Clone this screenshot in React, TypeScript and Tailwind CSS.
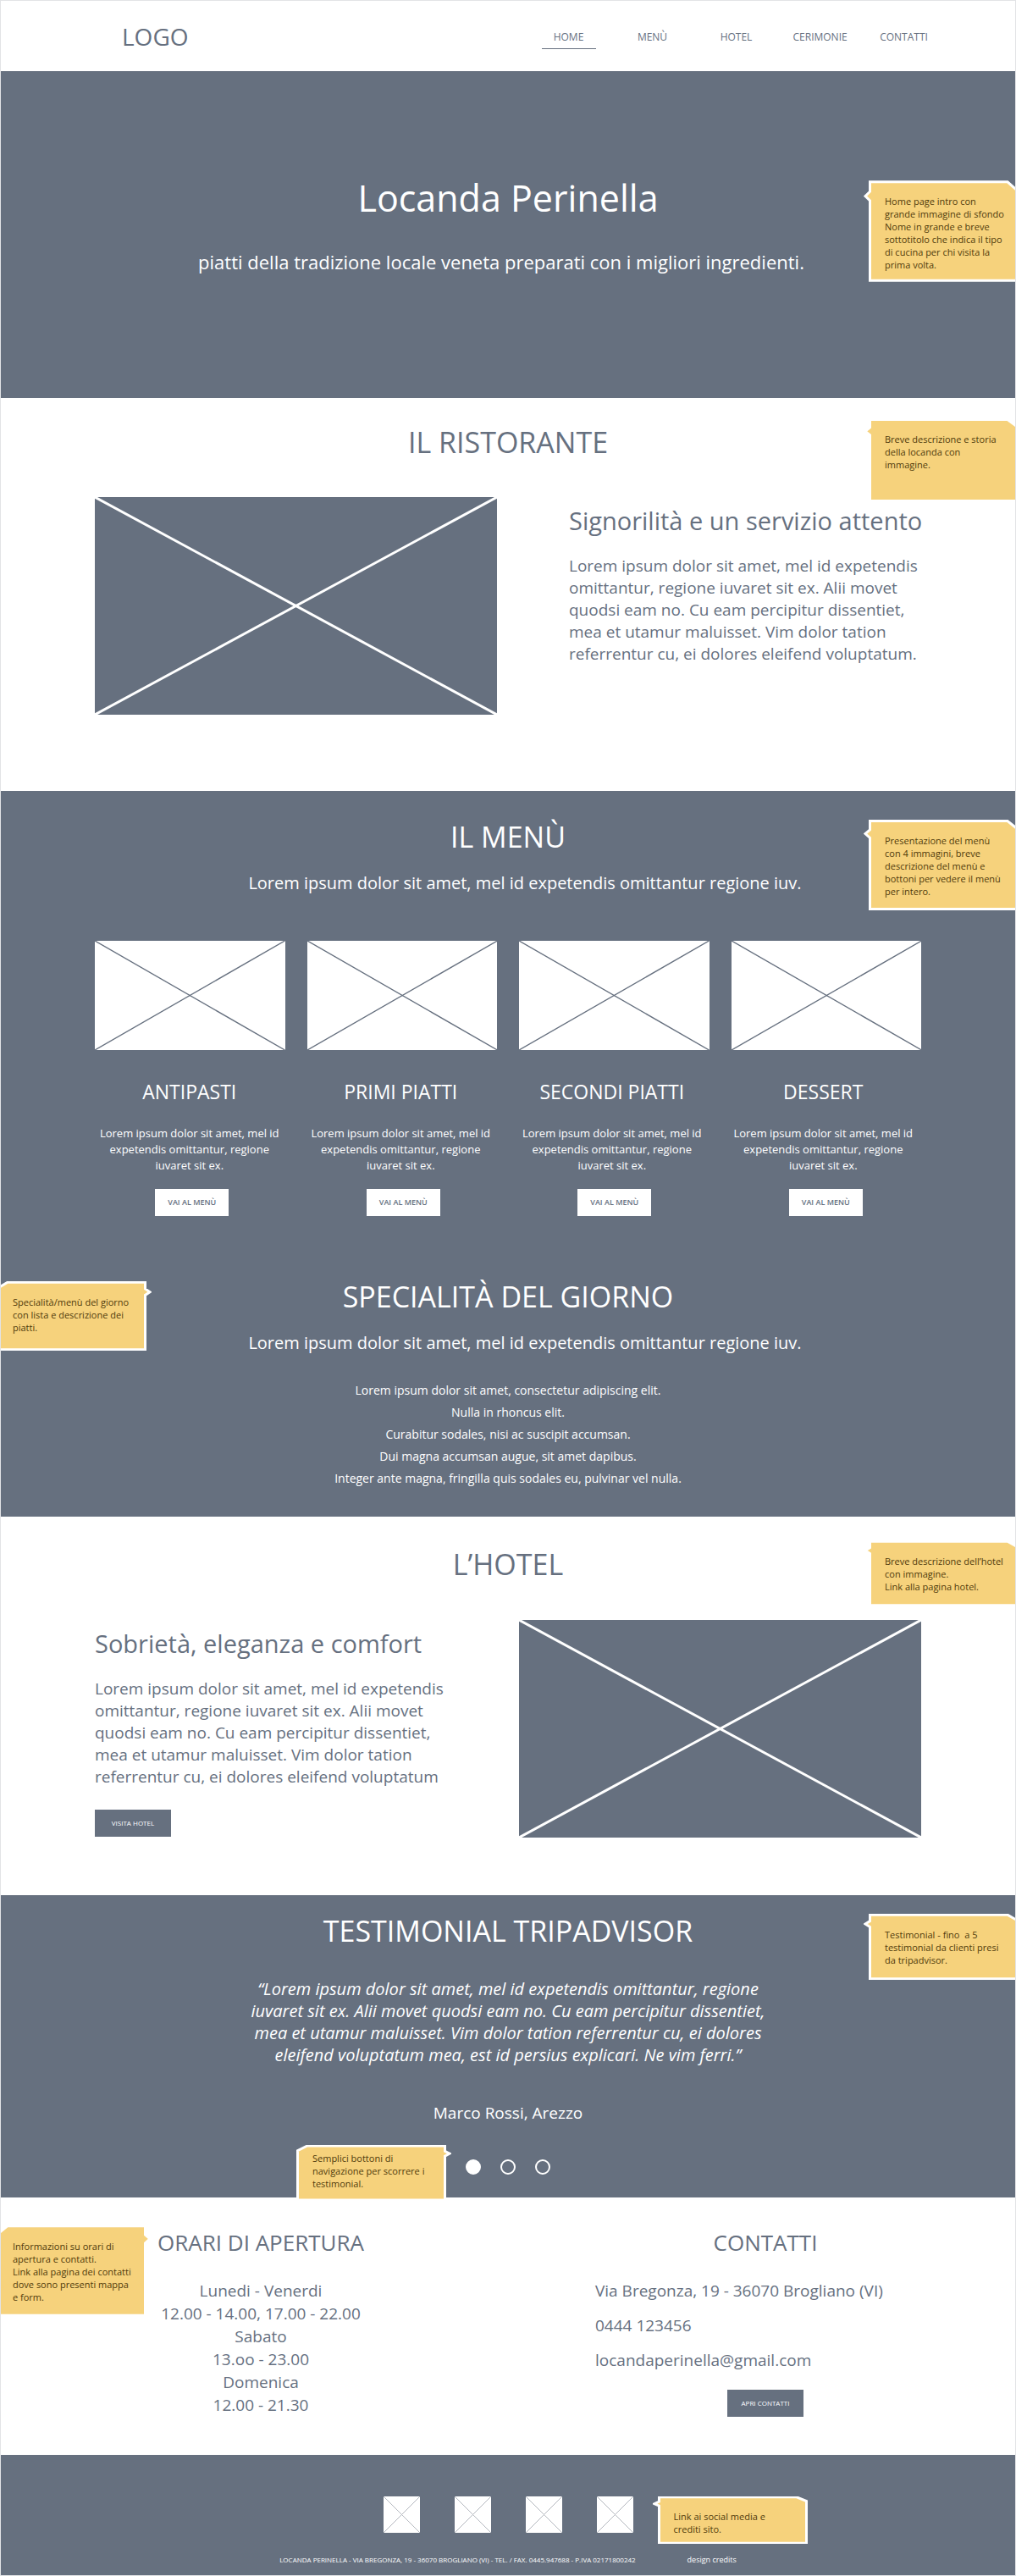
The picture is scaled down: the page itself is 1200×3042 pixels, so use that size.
import { Fragment, type ReactNode } from "react";

const NAV = ["HOME", "MENÙ", "HOTEL", "CERIMONIE", "CONTATTI"];
const MENU = ["ANTIPASTI", "PRIMI PIATTI", "SECONDI PIATTI", "DESSERT"];
const SPECIALS = [
  "Lorem ipsum dolor sit amet, consectetur adipiscing elit.",
  "Nulla in rhoncus elit.",
  "Curabitur sodales, nisi ac suscipit accumsan.",
  "Dui magna accumsan augue, sit amet dapibus.",
  "Integer ante magna, fringilla quis sodales eu, pulvinar vel nulla.",
];
const QUOTE = [
  "“Lorem ipsum dolor sit amet, mel id expetendis omittantur, regione",
  "iuvaret sit ex. Alii movet quodsi eam no. Cu eam percipitur dissentiet,",
  "mea et utamur maluisset. Vim dolor tation referrentur cu, ei dolores",
  "eleifend voluptatum mea, est id persius explicari. Ne vim ferri.”",
];
const HOURS = [
  "Lunedi - Venerdi",
  "12.00 - 14.00, 17.00 - 22.00",
  "Sabato",
  "13.oo - 23.00",
  "Domenica",
  "12.00 - 21.30",
];

function Lines({ lines }: { lines: string[] }) {
  return (
    <>
      {lines.map((line, i) => (
        <Fragment key={line}>
          {i > 0 && <br />}
          {line}
        </Fragment>
      ))}
    </>
  );
}

/* Image placeholder: a filled box with its two diagonals. */
function Placeholder({ className, stroke }: { className: string; stroke: number }) {
  return (
    <svg className={className} viewBox="0 0 100 100" preserveAspectRatio="none" aria-hidden="true">
      <path d="M0 0L100 100M100 0L0 100" fill="none" stroke="currentColor" strokeWidth={stroke} vectorEffect="non-scaling-stroke" />
    </svg>
  );
}

/* Yellow annotation whose pointer sits on the left or right side. */
function Note({ lines, pointer, className }: { lines: string[]; pointer: "left" | "right"; className: string }) {
  const left = pointer === "left";
  return (
    <aside className={`absolute z-10 w-[183px] text-left text-[11px] leading-[15px] whitespace-pre text-[#4f3a0b] ${left ? "pl-[25px]" : "pl-[19px]"} ${className}`}>
      <svg className={`absolute inset-0 -z-10 h-full w-full ${left ? "" : "-scale-x-100"}`} viewBox="0 0 183 100" preserveAspectRatio="none" aria-hidden="true">
        <path d="M7.5 1.5H170L181.5 10V98.5H7.5V20L2 15.5L7.5 11Z" fill="#f6d27c" stroke="#fff" strokeWidth="3" vectorEffect="non-scaling-stroke" />
      </svg>
      <p>
        <Lines lines={lines} />
      </p>
    </aside>
  );
}

function Title({ children }: { children: ReactNode }) {
  return <h2 className="text-center text-[34px] leading-[46px]">{children}</h2>;
}

function Lead() {
  return (
    <p className="mt-[18px] pl-10 text-center text-[20px] leading-7">
      Lorem ipsum dolor sit amet, mel id expetendis omittantur regione iuv.
    </p>
  );
}

export default function App() {
  return (
    <div className="overflow-hidden border border-[#e2e3e6] bg-white font-['Open_Sans',sans-serif] text-[#66707f]">
      <header className="flex h-[83px] items-center justify-between pr-[82px] pl-[143px]">
        <a href="#" className="text-[28px] leading-9">LOGO</a>
        <nav className="grid w-[495px] grid-cols-5 justify-items-center pt-2">
          {NAV.map((item, i) => (
            <a
              key={item}
              href="#"
              className={`w-16 border-b pb-[5px] text-center text-[12px] leading-4 font-medium ${i === 0 ? "border-[#66707f]" : "border-transparent"}`}
            >
              {item}
            </a>
          ))}
        </nav>
      </header>

      <section className="relative bg-[#66707f] pt-[120px] pb-[146px] text-center text-white">
        <h1 className="text-[43px] leading-[60px]">Locanda Perinella</h1>
        <p className="mt-[30px] pr-4 text-[22px] leading-[30px]">
          piatti della tradizione locale veneta preparati con i migliori ingredienti.
        </p>
        <Note
          pointer="left"
          className="top-[129px] -right-1 h-[120px] pt-[17px]"
          lines={["Home page intro con", "grande immagine di sfondo", "Nome in grande e breve", "sottotitolo che indica il tipo", "di cucina per chi visita la", "prima volta."]}
        />
      </section>

      <section className="relative pt-[29px] pb-[90px]">
        <Title>IL RISTORANTE</Title>
        <div className="mx-auto mt-[42px] flex max-w-[976px] justify-between">
          <Placeholder stroke={3} className="h-[257px] w-[475px] bg-[#66707f] text-white" />
          <div className="w-[416px] pt-2">
            <h3 className="text-[29px] leading-10 whitespace-nowrap">Signorilità e un servizio attento</h3>
            <p className="mt-5 text-[19px] leading-[26px]">
              Lorem ipsum dolor sit amet, mel id expetendis omittantur, regione iuvaret sit ex. Alii movet quodsi eam no. Cu eam percipitur
              dissentiet, mea et utamur maluisset. Vim dolor tation referrentur cu, ei dolores eleifend voluptatum.
            </p>
          </div>
        </div>
        <Note
          pointer="left"
          className="top-[24px] -right-1 h-[99px] pt-[17px]"
          lines={["Breve descrizione e storia", "della locanda con", "immagine."]}
        />
      </section>

      <div className="bg-[#66707f] text-white">
        <section className="relative pt-[31px]">
          <Title>IL MENÙ</Title>
          <Lead />
          <div className="mx-auto mt-[54px] max-w-[976px]">
            <div className="grid grid-cols-4 gap-[26px]">
              {MENU.map((name) => (
                <Placeholder key={name} stroke={1.4} className="h-[129px] w-full bg-white text-[#66707f]" />
              ))}
            </div>
            <div className="mt-[33px] grid grid-cols-4 gap-[26px] pr-1">
              {MENU.map((name) => (
                <article key={name} className="text-center">
                  <h3 className="text-[23px] leading-8 whitespace-nowrap">{name}</h3>
                  <p className="mt-6 text-[13px] leading-[19px]">
                    <Lines lines={["Lorem ipsum dolor sit amet, mel id", "expetendis omittantur, regione", "iuvaret sit ex."]} />
                  </p>
                  <div className="mt-[18px] flex justify-center pl-1.5">
                    <button type="button" className="h-8 w-[87px] bg-white text-[9px] leading-3 font-semibold text-[#66707f]">
                      VAI AL MENÙ
                    </button>
                  </div>
                </article>
              ))}
            </div>
          </div>
          <Note
            pointer="left"
            className="top-[34px] -right-1 h-[107px] pt-[17px]"
            lines={["Presentazione del menù", "con 4 immagini, breve", "descrizione del menù e", "bottoni per vedere il menù", "per intero."]}
          />
        </section>

        <section className="relative pt-[72px] pb-8">
          <Title>SPECIALITÀ DEL GIORNO</Title>
          <Lead />
          <ul className="mt-[29px] text-center text-[14px] leading-[26px]">
            {SPECIALS.map((item) => (
              <li key={item}>{item}</li>
            ))}
          </ul>
          <Note
            pointer="right"
            className="top-[77px] -left-[5px] h-[82px] pt-[17px]"
            lines={["Specialità/menù del giorno", "con lista e descrizione dei", "piatti."]}
          />
        </section>
      </div>

      <section className="relative pt-[33px] pb-[68px]">
        <Title>L’HOTEL</Title>
        <div className="mx-auto mt-[43px] flex max-w-[976px] justify-between">
          <div className="w-[416px] pt-2">
            <h3 className="text-[29px] leading-10 whitespace-nowrap">Sobrietà, eleganza e comfort</h3>
            <p className="mt-5 text-[19px] leading-[26px]">
              Lorem ipsum dolor sit amet, mel id expetendis omittantur, regione iuvaret sit ex. Alii movet quodsi eam no. Cu eam percipitur
              dissentiet, mea et utamur maluisset. Vim dolor tation referrentur cu, ei dolores eleifend voluptatum
            </p>
            <button type="button" className="mt-[26px] block h-8 w-[90px] bg-[#66707f] text-[8px] leading-3 text-white">
              VISITA HOTEL
            </button>
          </div>
          <Placeholder stroke={3} className="h-[257px] w-[475px] bg-[#66707f] text-white" />
        </div>
        <Note
          pointer="left"
          className="top-7 -right-1 h-[78px] pt-[17px]"
          lines={["Breve descrizione dell’hotel", "con immagine.", "Link alla pagina hotel."]}
        />
      </section>

      <section className="relative bg-[#66707f] pt-[19px] pb-[27px] text-center text-white">
        <Title>TESTIMONIAL TRIPADVISOR</Title>
        <blockquote className="mt-[33px] text-[20px] leading-[26px] italic">
          <Lines lines={QUOTE} />
        </blockquote>
        <p className="mt-[42px] text-[19px] leading-[26px]">Marco Rossi, Arezzo</p>
        <div className="mt-[42px] flex justify-center gap-[23px]">
          {[1, 2, 3].map((n) => (
            <button
              key={n}
              type="button"
              aria-label={`Testimonial ${n}`}
              className={`size-[18px] rounded-full border-2 border-white ${n === 1 ? "bg-white" : ""}`}
            />
          ))}
        </div>
        <Note
          pointer="left"
          className="top-[22px] -right-1 h-[78px] pt-[17px]"
          lines={["Testimonial - fino  a 5", "testimonial da clienti presi", "da tripadvisor."]}
        />
        <Note
          pointer="right"
          className="top-[295px] left-[349px] h-[66px] pt-2"
          lines={["Semplici bottoni di", "navigazione per scorrere i", "testimonial."]}
        />
      </section>

      <section className="relative flex justify-between pt-[35px] pr-[94px] pb-[45px] pl-[106px]">
        <div className="w-[402px] text-center">
          <h2 className="text-[26px] leading-9">ORARI DI APERTURA</h2>
          <p className="mt-[26px] text-[19px] leading-[27px]">
            <Lines lines={HOURS} />
          </p>
        </div>
        <div className="flex w-[402px] flex-col">
          <h2 className="text-center text-[26px] leading-9">CONTATTI</h2>
          <address className="mt-[26px] flex flex-col items-start gap-3.5 text-[19px] leading-[27px] not-italic">
            <span>Via Bregonza, 19 - 36070 Brogliano (VI)</span>
            <a href="tel:0444123456">0444 123456</a>
            <a href="mailto:locandaperinella@gmail.com">locandaperinella@gmail.com</a>
          </address>
          <button type="button" className="mx-auto mt-[21px] h-8 w-[90px] bg-[#66707f] text-[8px] leading-3 text-white">
            APRI CONTATTI
          </button>
        </div>
        <Note
          pointer="right"
          className="top-[32px] -left-[5px] h-[109px] pt-[18px]"
          lines={["Informazioni su orari di", "apertura e contatti.", "Link alla pagina dei contatti", "dove sono presenti mappa", "e form."]}
        />
      </section>

      <footer className="bg-[#66707f] pt-[49px] pb-3 text-white">
        <div className="relative mx-auto flex w-[295px] justify-between">
          {[1, 2, 3, 4].map((n) => (
            <a key={n} href="#" aria-label={`Social ${n}`} className="block size-[43px]">
              <Placeholder stroke={1} className="size-full bg-white text-[#b4b8bf]" />
            </a>
          ))}
          <Note pointer="left" className="top-0 left-[318px] h-14 pt-4" lines={["Link ai social media e", "crediti sito."]} />
        </div>
        <div className="mt-[26px] flex justify-center gap-[61px] leading-3">
          <p className="text-[8px]">
            LOCANDA PERINELLA - VIA BREGONZA, 19 - 36070 BROGLIANO (VI) - TEL. / FAX. 0445.947688 - P.IVA 02171800242
          </p>
          <a href="#" className="text-[9px]">design credits</a>
        </div>
      </footer>
    </div>
  );
}
